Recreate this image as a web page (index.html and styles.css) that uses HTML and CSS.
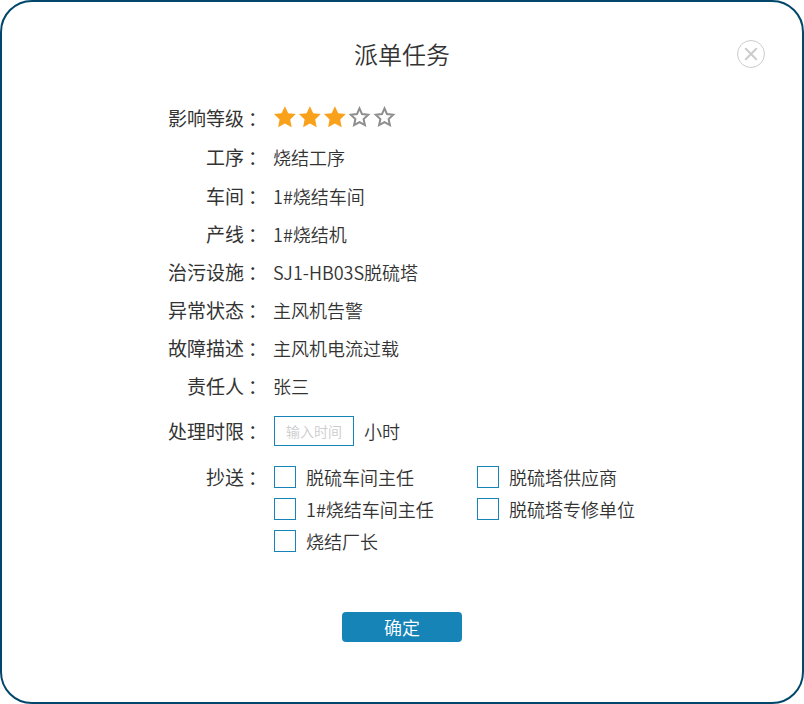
FILE: index.html
```html
<!DOCTYPE html>
<html lang="zh-CN">
<head>
<meta charset="utf-8">
<meta name="viewport" content="width=device-width, initial-scale=1">
<title>派单任务</title>
<link rel="stylesheet" href="styles.css">
</head>
<body>
<main class="dialog" role="dialog" aria-labelledby="title">
  <h1 class="title" id="title">派单任务</h1>
  <button class="close" type="button" aria-label="关闭">
    <svg viewBox="0 0 30 30" width="30" height="30" fill="none" stroke="#ccc">
      <circle cx="15" cy="15" r="13.5"/>
      <path d="M9.8 9.8 20.2 20.2M20.2 9.8 9.8 20.2" stroke-width="2" stroke-linecap="round"/>
    </svg>
  </button>
  <svg width="0" height="0" class="defs" aria-hidden="true">
    <symbol id="full" viewBox="0 0 24 24">
      <path d="M11.9 .2 15.2 7.2 22.8 8.1 17.2 13.5 18.7 21.2 11.9 17.5 5.1 21.2 6.6 13.5 1 8.1 8.6 7.2Z"/>
    </symbol>
    <symbol id="empty" viewBox="0 0 24 24">
      <path d="M11.5 2.4 14 8.1 20.2 8.8 15.6 13 16.9 19.1 11.5 16.1 6.1 19.1 7.4 13 2.8 8.8 9 8.1Z"/>
    </symbol>
  </svg>
  <form class="form">
    <dl class="details">
      <div class="row wide"><dt>影响等级<span class="colon">：</span></dt>
        <dd class="stars" role="img" aria-label="3 / 5">
          <svg class="star full"><use href="#full"/></svg>
          <svg class="star full"><use href="#full"/></svg>
          <svg class="star full"><use href="#full"/></svg>
          <svg class="star"><use href="#empty"/></svg>
          <svg class="star"><use href="#empty"/></svg>
        </dd></div>
      <div class="row wide"><dt>工序<span class="colon">：</span></dt><dd>烧结工序</dd></div>
      <div class="row wide"><dt>车间<span class="colon">：</span></dt><dd>1#烧结车间</dd></div>
      <div class="row"><dt>产线<span class="colon">：</span></dt><dd>1#烧结机</dd></div>
      <div class="row"><dt>治污设施<span class="colon">：</span></dt><dd>SJ1-HB03S脱硫塔</dd></div>
      <div class="row"><dt>异常状态<span class="colon">：</span></dt><dd>主风机告警</dd></div>
      <div class="row"><dt>故障描述<span class="colon">：</span></dt><dd>主风机电流过载</dd></div>
      <div class="row"><dt>责任人<span class="colon">：</span></dt><dd>张三</dd></div>
    </dl>
    <div class="row limit">
      <label class="name" for="hours">处理时限<span class="colon">：</span></label>
      <div class="field"><input class="hours" id="hours" type="text" placeholder="输入时间"><span>小时</span></div>
    </div>
    <div class="row copy" role="group" aria-labelledby="copy">
      <span class="name" id="copy">抄送<span class="colon">：</span></span>
      <div class="options">
        <label class="option"><input type="checkbox">脱硫车间主任</label>
        <label class="option"><input type="checkbox">脱硫塔供应商</label>
        <label class="option"><input type="checkbox">1#烧结车间主任</label>
        <label class="option"><input type="checkbox">脱硫塔专修单位</label>
        <label class="option"><input type="checkbox">烧结厂长</label>
      </div>
    </div>
    <button class="submit" type="button">确定</button>
  </form>
</main>
</body>
</html>
```
FILE: styles.css
```css
* {
  box-sizing: border-box;
}

body {
  margin: 0;
  background: #fff;
  color: #333;
  font: 350 18px/32px "Noto Sans CJK SC", sans-serif;
}

.dialog {
  position: relative;
  min-height: 100vh;
  padding: 32px 16px;
  border: 2px solid #00476b;
  border-radius: 32px;
}

.title {
  margin: 0 0 24px;
  font-size: 24px;
  font-weight: 350;
  line-height: 40px;
  text-align: center;
}

.close {
  position: absolute;
  top: 37px;
  right: 36px;
  width: 30px;
  height: 30px;
  padding: 0;
  border: 0;
  background: none;
  cursor: pointer;
}

.close svg {
  display: block;
}

.defs {
  position: absolute;
}

.form {
  max-width: 480px;
  margin: 0 auto;
}

.details {
  margin: 0;
}

.row {
  display: grid;
  grid-template-columns: 101px 1fr;
  column-gap: 10px;
  align-items: center;
  min-height: 38px;
}

.wide {
  min-height: 39px;
}

dt,
.name {
  font-size: 19px;
  font-weight: 400;
  text-align: right;
  white-space: nowrap;
}

.colon {
  display: inline-block;
  width: 19px;
  padding-left: 4px;
  text-align: left;
}

dd {
  margin: 0;
}

.stars {
  display: flex;
  gap: 1px;
}

.star {
  width: 24px;
  height: 24px;
  fill: none;
  stroke: #8e8e8e;
  stroke-width: 2px;
}

.full {
  fill: #f9a11b;
  stroke: none;
}

.limit {
  margin-top: 7px;
}

.field {
  display: flex;
  align-items: center;
  gap: 10px;
  padding-left: 1px;
}

.hours {
  width: 80px;
  height: 30px;
  padding: 0 8px;
  border: 1px solid #1784b8;
  border-radius: 0;
  background: #fff;
  color: inherit;
  font: inherit;
  font-size: 14px;
  text-align: center;
}

.hours::placeholder {
  color: #ccc;
  opacity: 1;
}

.copy {
  align-items: start;
  margin-top: 11px;
}

.options {
  display: grid;
  grid-template-columns: 203px 1fr;
  padding-left: 1px;
}

.option {
  display: flex;
  align-items: center;
  gap: 10px;
  white-space: nowrap;
}

.option input {
  width: 22px;
  height: 22px;
  margin: 0;
  border: 1px solid #1784b8;
  background: #fff;
  appearance: none;
}

.option input:checked {
  background: #1784b8;
}

.submit {
  display: block;
  width: 120px;
  height: 30px;
  margin: 55px auto 0;
  padding: 0;
  border: 0;
  border-radius: 4px;
  background: #1784b8;
  color: #fff;
  font: inherit;
  line-height: 30px;
  cursor: pointer;
}
```
